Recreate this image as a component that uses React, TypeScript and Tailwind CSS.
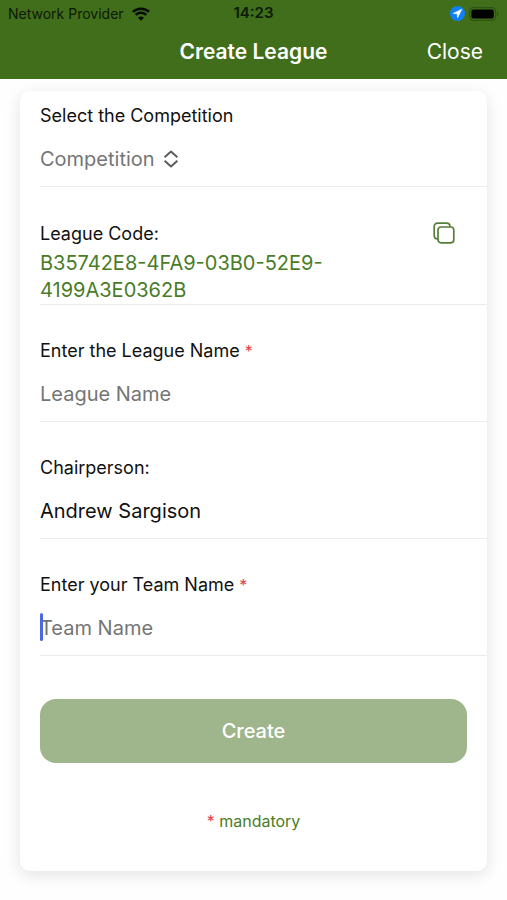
import { useState, type ReactNode } from "react";

/* ---------------- ICONS ---------------- */

function WifiIcon() {
  return (
    <svg width="18" height="14" viewBox="0 0 18 14" fill="none" aria-hidden="true">
      <path d="M0.9 4.9C5.4 0.6 12.6 0.6 17.1 4.9" stroke="#050c02" strokeWidth="2.6" />
      <path d="M3.7 7.9C6.7 5.1 11.3 5.1 14.3 7.9" stroke="#050c02" strokeWidth="2.4" />
      <path d="M9 13.8L6 10.7C7.7 9.1 10.3 9.1 12 10.7Z" fill="#050c02" />
    </svg>
  );
}

function LocationIcon() {
  return (
    <svg width="15" height="15" viewBox="0 0 15 15" aria-hidden="true">
      <circle cx="7.5" cy="7.5" r="7.5" fill="#0f80f5" />
      <path
        d="M11.8 3.2L3.2 7.4L7.2 7.8L7.6 11.8Z"
        fill="#fff"
        stroke="#fff"
        strokeWidth="0.6"
        strokeLinejoin="round"
      />
    </svg>
  );
}

function BatteryIcon() {
  return (
    <svg width="30" height="14" viewBox="0 0 30 14" aria-hidden="true">
      <rect x="0.6" y="0.6" width="26" height="12.8" rx="4" fill="none" stroke="#2f5413" strokeWidth="1.2" />
      <rect x="2.4" y="2.4" width="22.4" height="9.2" rx="2" fill="#000" />
      <path d="M28 4.8C29.6 5.4 29.6 8.6 28 9.2Z" fill="#2f5413" />
    </svg>
  );
}

function ChevronsIcon() {
  return (
    <svg
      width="16"
      height="18"
      viewBox="0 0 16 18"
      fill="none"
      stroke="#5c5c5c"
      strokeWidth="2"
      strokeLinejoin="round"
      aria-hidden="true"
    >
      <path d="M1.6 7.2L8 1.6L14.4 7.2" />
      <path d="M1.6 10.8L8 16.4L14.4 10.8" />
    </svg>
  );
}

function CopyIcon() {
  return (
    <svg
      width="22"
      height="22"
      viewBox="0 0 22 22"
      fill="none"
      stroke="#557f38"
      strokeWidth="1.7"
      aria-hidden="true"
    >
      <rect x="5" y="5" width="15.8" height="15.8" rx="3" />
      <path d="M17 4.8V4.2C16.8 2.4 15.6 1.2 13.8 1.2H4.6C2.6 1.2 1.2 2.6 1.2 4.6V13.6C1.2 15.6 2.6 17 4.4 17H5" />
    </svg>
  );
}

/* ---------------- FORM PARTS ---------------- */

const labelClass = "block text-[18px] leading-6 text-[#111111]";
const valueClass =
  "block h-[30px] w-full bg-transparent p-0 text-[20px] leading-[30px] text-[#111111] outline-none placeholder:text-[#757575] placeholder:opacity-100";

function Star() {
  return <span className="text-[16px] leading-none text-[#e0414f]">*</span>;
}

function Row({ children }: { children: ReactNode }) {
  return (
    <div className="ml-5 border-b border-[#ebebeb] pt-[34px] pb-3 first:pt-[13px]">
      {children}
    </div>
  );
}

export default function App() {
  const [competition, setCompetition] = useState("");
  const [leagueName, setLeagueName] = useState("");
  const [chairperson, setChairperson] = useState("Andrew Sargison");
  const [teamName, setTeamName] = useState("");

  const code = "B35742E8-4FA9-03B0-52E9-4199A3E0362B";
  const ready = Boolean(competition && leagueName && teamName);

  return (
    <div className="min-h-screen bg-[#fefefe] pb-7 font-['Inter','Liberation_Sans',sans-serif]">

      {/* ================= HEADER ================= */}

      <header className="bg-[#406e1a] pb-0.5">
        <div className="grid h-[27px] grid-cols-3 items-center px-2 text-[#0c1a04]">
          <div className="flex items-center gap-2 text-[14px] whitespace-nowrap">
            <span>Network Provider</span>
            <WifiIcon />
          </div>
          <span className="text-center text-[15px] font-semibold">14:23</span>
          <div className="flex items-center justify-end gap-1">
            <LocationIcon />
            <BatteryIcon />
          </div>
        </div>

        <div className="grid h-[50px] grid-cols-[1fr_auto_1fr] items-center px-6 text-white">
          <h1 className="col-start-2 text-[21px] font-semibold">Create League</h1>
          <button type="button" className="justify-self-end text-[21px]">
            Close
          </button>
        </div>
      </header>

      {/* ================= FORM CARD ================= */}

      <form
        className="mx-5 mt-3 rounded-[10px] bg-white pb-[38px] shadow-[0_4px_16px_rgba(0,0,0,0.11)]"
        onSubmit={(e) => e.preventDefault()}
      >
        <Row>
          <label htmlFor="competition" className={labelClass}>
            Select the Competition
          </label>
          <div className="mt-4 flex h-[30px] items-center gap-2">
            <select
              id="competition"
              value={competition}
              onChange={(e) => setCompetition(e.target.value)}
              className="field-sizing-content appearance-none bg-transparent p-0 text-[20px] leading-[30px] text-[#757575] outline-none"
            >
              <option value="">Competition</option>
            </select>
            <ChevronsIcon />
          </div>
        </Row>

        <div className="ml-5 flex items-start justify-between border-b border-[#ebebeb] pt-[35px]">
          <div className="w-[300px]">
            <p className={labelClass}>League Code:</p>
            <p className="mt-1 text-[20px] leading-[27px] text-[#4a7c28]">{code}</p>
          </div>
          <button
            type="button"
            aria-label="Copy league code"
            className="mr-8"
            onClick={() => navigator.clipboard?.writeText(code)}
          >
            <CopyIcon />
          </button>
        </div>

        <Row>
          <label htmlFor="league" className={labelClass}>
            Enter the League Name <Star />
          </label>
          <input
            id="league"
            type="text"
            placeholder="League Name"
            value={leagueName}
            onChange={(e) => setLeagueName(e.target.value)}
            className={`mt-4 ${valueClass}`}
          />
        </Row>

        <Row>
          <label htmlFor="chair" className={labelClass}>
            Chairperson:
          </label>
          <input
            id="chair"
            type="text"
            value={chairperson}
            onChange={(e) => setChairperson(e.target.value)}
            className={`mt-4 ${valueClass}`}
          />
        </Row>

        <Row>
          <label htmlFor="team" className={labelClass}>
            Enter your Team Name <Star />
          </label>
          <div className="relative mt-4">
            <input
              id="team"
              type="text"
              placeholder="Team Name"
              value={teamName}
              onChange={(e) => setTeamName(e.target.value)}
              className={valueClass}
            />
            {!teamName && (
              <span className="pointer-events-none absolute top-0 left-0 h-7 w-[3px] rounded-full bg-[#4a68e0]" />
            )}
          </div>
        </Row>

        <div className="mx-5 mt-[43px]">
          <button
            type="submit"
            disabled={!ready}
            className="h-16 w-full rounded-[16px] bg-[#406e1a] text-[20px] font-medium text-white disabled:bg-[#9fb58c]"
          >
            Create
          </button>
        </div>

        <p className="mt-[46px] text-center text-[16px] leading-6 text-[#4a7c28]">
          <Star /> mandatory
        </p>
      </form>
    </div>
  );
}
